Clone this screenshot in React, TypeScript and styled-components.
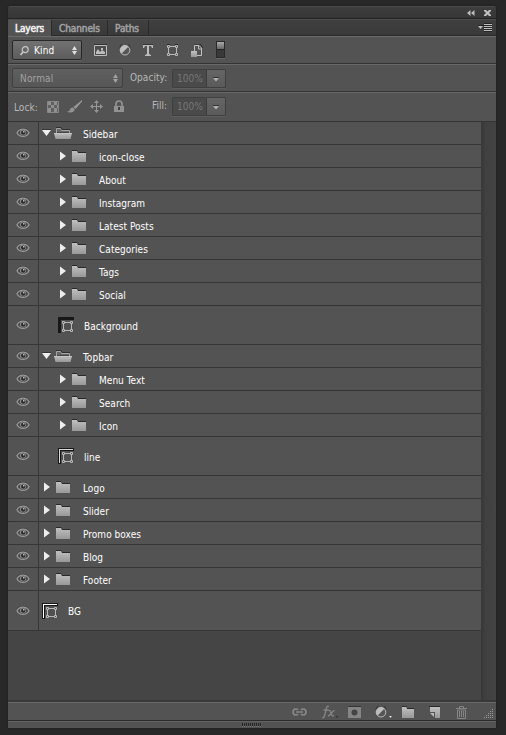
import React from "react";
import styled, { createGlobalStyle } from "styled-components";

const GlobalStyle = createGlobalStyle`
  * { box-sizing: border-box; }
  body { margin: 0; background: #282828; }
  svg { display: block; flex: none; }
`;

const Desktop = styled.div`
  height: 735px;
  padding: 6px 10px 7px 8px;
  background: #282828;
  font-family: "DejaVu Sans Condensed", "DejaVu Sans", sans-serif;
  font-stretch: condensed;
  font-size: 10px;
  line-height: 14px;
  letter-spacing: 0.04px;
  color: #fff;
`;
const Panel = styled.section`
  height: 722px;
  display: flex;
  flex-direction: column;
  background: #535353;
  border-radius: 3px 3px 0 0;
  box-shadow: 0 0 2px #1b1b1b;
  overflow: hidden;
`;
const TitleBar = styled.header`
  height: 13px;
  flex: none;
  display: flex;
  justify-content: flex-end;
  gap: 9px;
  padding: 3px 5px 0 0;
  border-top: 1px solid #4b4b4b;
  border-bottom: 1px solid #242424;
  background: linear-gradient(#3d3d3d, #373737);
`;
const TabBar = styled.nav`
  height: 17px;
  flex: none;
  display: flex;
  background: linear-gradient(#404040, #393939);
  border-top: 1px solid #4c4c4c;
  border-bottom: 1px solid #2a2a2a;
`;
const Tab = styled.button<{ $width: number; $active?: boolean }>`
  width: ${(p) => p.$width}px;
  height: 16px;
  padding: 2px 0 0 7px;
  border: 0;
  border-right: 1px solid #2a2a2a;
  background: ${(p) => (p.$active ? "#535353" : "transparent")};
  color: ${(p) => (p.$active ? "#f4f4f4" : "#a2a2a2")};
  font: 10px/14px "DejaVu Sans Condensed", "DejaVu Sans", sans-serif;
  font-stretch: condensed;
  letter-spacing: -0.1px;
  -webkit-text-stroke: 0.5px currentColor;
  text-align: left;
`;
const TabMenu = styled.div`
  margin: 3px 4px 0 auto;
`;
const Toolbar = styled.div<{ $height: number }>`
  height: ${(p) => p.$height}px;
  flex: none;
  display: flex;
  align-items: flex-start;
  padding-left: 4px;
  border-top: 1px solid #696969;
  border-bottom: 1px solid #343434;
`;
const Select = styled.div<{ $width: number; $dim?: boolean }>`
  width: ${(p) => p.$width}px;
  height: 20px;
  margin-top: 3px;
  padding: 0 4px 0 7px;
  display: flex;
  align-items: center;
  justify-content: space-between;
  border: 1px solid ${(p) => (p.$dim ? "#404040" : "#282828")};
  border-radius: 2px;
  background: ${(p) => (p.$dim ? "linear-gradient(#5f5f5f, #565656)" : "linear-gradient(#727272, #5c5c5c)")};
  box-shadow: 0 1px 0 #606060;
  color: ${(p) => (p.$dim ? "#a2a2a2" : "#fff")};
  letter-spacing: 0.15px;
`;
const SelectLabel = styled.span`
  display: flex;
  align-items: center;
  gap: 5px;
  padding-top: 1px;
`;
const IconStrip = styled.div<{ $left: number; $top: number; $gap: number }>`
  display: flex;
  align-items: center;
  gap: ${(p) => p.$gap}px;
  margin: ${(p) => p.$top}px 0 0 ${(p) => p.$left}px;
`;
const FieldLabel = styled.span<{ $left: number; $width: number; $top: number }>`
  width: ${(p) => p.$width}px;
  margin: ${(p) => p.$top}px 0 0 ${(p) => p.$left}px;
  color: #b8b8b8;
  white-space: nowrap;
`;
const Percent = styled.div`
  width: 54px;
  height: 19px;
  margin-top: 4px;
  display: flex;
  border: 1px solid #3f3f3f;
  border-radius: 1px;
  box-shadow: 0 1px 0 #5e5e5e;
  background: #4a4a4a;
  color: #777;
`;
const PercentValue = styled.span`
  width: 34px;
  padding: 2px 0 0 4px;
  border-right: 1px solid #3c3c3c;
`;
const PercentArrow = styled.span`
  flex: 1;
  display: flex;
  align-items: center;
  justify-content: center;
  padding-top: 1px;
  background: linear-gradient(#656565, #5a5a5a);
`;
const Body = styled.div`
  flex: 1;
  display: flex;
  background: #454545;
  border-bottom: 2px solid #393939;
`;
const List = styled.div`
  width: 473px;
`;
const Scrollbar = styled.div`
  flex: 1;
  background: linear-gradient(90deg, #373737, #404040 30%, #434343);
`;
const Row = styled.div<{ $height: number }>`
  height: ${(p) => p.$height}px;
  display: flex;
  background: #535353;
  border-bottom: 1px solid #363636;
`;
const EyeCell = styled.div`
  width: 31px;
  display: flex;
  align-items: center;
  justify-content: center;
  border-right: 1px solid #363636;
`;
const Node = styled.div<{ $indent: number }>`
  display: flex;
  align-items: center;
  padding-left: ${(p) => p.$indent}px;
`;
const Glyphs = styled.span<{ $width: number; $gap: number }>`
  width: ${(p) => p.$width}px;
  display: flex;
  align-items: center;
  gap: ${(p) => p.$gap}px;
`;
const Name = styled.span`
  padding-top: 3px;
  white-space: nowrap;
`;
const Footer = styled.footer`
  height: 19px;
  flex: none;
  display: flex;
  align-items: flex-start;
  padding: 2px 2px 0 284px;
  border-top: 1px solid #696969;
  border-bottom: 1px solid #2b2b2b;
`;
const FooterItem = styled.span<{ $width: number }>`
  width: ${(p) => p.$width}px;
  height: 14px;
  flex: none;
  display: flex;
  align-items: center;
`;
const ResizeBar = styled.div`
  height: 7px;
  flex: none;
  display: flex;
  padding: 1px 0 0 234px;
  border-top: 1px solid #626262;
`;

type Kind = "open" | "closed" | "shape";
interface Layer { name: string; kind: Kind; depth?: number; thumb?: string; height?: number }

const layers: Layer[] = [
  { name: "Sidebar", kind: "open" },
  { name: "icon-close", kind: "closed", depth: 1 },
  { name: "About", kind: "closed", depth: 1 },
  { name: "Instagram", kind: "closed", depth: 1 },
  { name: "Latest Posts", kind: "closed", depth: 1 },
  { name: "Categories", kind: "closed", depth: 1 },
  { name: "Tags", kind: "closed", depth: 1 },
  { name: "Social", kind: "closed", depth: 1 },
  { name: "Background", kind: "shape", depth: 1, thumb: "#191919", height: 39 },
  { name: "Topbar", kind: "open" },
  { name: "Menu Text", kind: "closed", depth: 1 },
  { name: "Search", kind: "closed", depth: 1 },
  { name: "Icon", kind: "closed", depth: 1 },
  { name: "line", kind: "shape", depth: 1, thumb: "#d8d8d8", height: 39 },
  { name: "Logo", kind: "closed" },
  { name: "Slider", kind: "closed" },
  { name: "Promo boxes", kind: "closed" },
  { name: "Blog", kind: "closed" },
  { name: "Footer", kind: "closed" },
  { name: "BG", kind: "shape", thumb: "#ffffff", height: 40 },
];

const Gradients = () => (
  <svg width="0" height="0">
    <defs>
      <linearGradient id="metal" x1="0" y1="0" x2="0" y2="1">
        <stop offset="0" stopColor="#c0c0c0" />
        <stop offset="1" stopColor="#989898" />
      </linearGradient>
      <linearGradient id="knob" x1="0" y1="0" x2="0" y2="1">
        <stop offset="0" stopColor="#aaa" />
        <stop offset="1" stopColor="#666" />
      </linearGradient>
    </defs>
  </svg>
);

const Eye = () => (
  <svg width="14" height="12" viewBox="0 0 14 12">
    <path d="M1 4.500C3.500.3 10.500.3 13 4.500" fill="none" stroke="#3a3a3a" />
    <path d="M1 5.700C3.500.9 10.500.9 13 5.700C10.500 10.700 3.500 10.700 1 5.700Z" fill="#484848" stroke="#9a9a9a" strokeWidth="1.300" />
    <circle cx="7" cy="5.600" r="3" fill="#8e8e8e" />
    <circle cx="7.200" cy="5.600" r="2.200" fill="#2c2c2c" />
    <rect x="7" y="4" width="1.500" height="1.500" fill="#bbb" />
  </svg>
);
const ArrowRight = () => (
  <svg width="6" height="10" viewBox="0 0 6 10"><path d="M0 .5L6 5L0 9.500Z" fill="#ededed" /></svg>
);
const ArrowDown = () => (
  <svg width="9" height="8" viewBox="0 0 9 8"><path d="M0 0H9V1H0Z" fill="#353535" /><path d="M0 1H9L4.500 7Z" fill="#efefef" /></svg>
);
const ClosedFolder = ({ width = 14 }: { width?: number }) => (
  <svg width={width} height="12" viewBox="0 0 14 12" preserveAspectRatio="none">
    <path d="M0 1V0H5L6 2H14V3H0Z" fill="#292929" />
    <path d="M0 1H5L6 3H14V12H0Z" fill="url(#metal)" />
  </svg>
);
const OpenFolder = () => (
  <svg width="18" height="12" viewBox="0 0 18 12">
    <path d="M2.500 6V1.500H6.500L7.500 3.500H15.500V6" fill="#656565" stroke="#a5a5a5" />
    <path d="M2 .5H7L8 2.500H16" fill="none" stroke="#303030" />
    <path d="M0 6H18L16.500 12H1.500Z" fill="url(#metal)" />
    <path d="M3 5.500H15" stroke="#474747" />
    <path d="M0 6.500H18" stroke="#c4c4c4" />
  </svg>
);
const ShapeFrame = ({ x = 0, y = 0 }: { x?: number; y?: number }) => (
  <g transform={`translate(${x} ${y})`} fill="none" stroke="#b9b9b9">
    <path d="M1.500 3V8M9.500 3V8M3 1.500H8M3 9.500H8" />
    <path d="M.5.5h2v2h-2zM8.500.5h2v2h-2zM.5 8.500h2v2h-2zM8.500 8.500h2v2h-2z" />
  </g>
);
const ShapeThumb = ({ color }: { color: string }) => (
  <svg width="16" height="16" viewBox="0 0 16 16">
    <path d="M0 0H16V3H3V16H0Z" fill="#171717" />
    <path d="M1 15V1H15V2H2V15Z" fill={color} />
    <path d="M3 3H16V16H3Z" fill="#505050" />
    <ShapeFrame x={4} y={4} />
  </svg>
);
const UpDown = ({ color }: { color: string }) => (
  <svg width="5" height="9" viewBox="0 0 5 9"><path d="M0 4L2.500 0L5 4ZM0 5H5L2.500 9Z" fill={color} /></svg>
);
const SmallTriangle = () => (
  <svg width="6" height="5" viewBox="0 0 6 5"><path d="M0 0H6V1H0Z" fill="#333" /><path d="M0 1H6L3 4.500Z" fill="#b0b0b0" /></svg>
);
const Adjustment = () => (
  <svg width="12" height="12" viewBox="0 0 12 12">
    <path d="M1 4A5 5 0 0 1 11 4" fill="none" stroke="#333" />
    <circle cx="6" cy="6.200" r="4.800" fill="#555" stroke="#bbb" />
    <path d="M2.600 9.600A4.800 4.800 0 0 1 9.400 2.800Z" fill="#bebebe" />
  </svg>
);

const LayerRow = ({ layer }: { layer: Layer }) => {
  const { kind, depth = 0 } = layer;
  const base = kind === "closed" ? 5 : 3;
  return (
    <Row $height={layer.height ?? 23}>
      <EyeCell><Eye /></EyeCell>
      <Node $indent={base + depth * 16}>
        <Glyphs $width={kind === "shape" ? 26 : kind === "open" ? 41 : 39} $gap={kind === "open" ? 3 : 6}>
          {kind === "open" && <><ArrowDown /><OpenFolder /></>}
          {kind === "closed" && <><ArrowRight /><ClosedFolder /></>}
          {kind === "shape" && <ShapeThumb color={layer.thumb ?? "#fff"} />}
        </Glyphs>
        <Name>{layer.name}</Name>
      </Node>
    </Row>
  );
};

const PercentField = () => (
  <Percent><PercentValue>100%</PercentValue><PercentArrow><SmallTriangle /></PercentArrow></Percent>
);

export default function App() {
  return (
    <Desktop>
      <GlobalStyle />
      <Panel>
        <TitleBar>
          <svg width="8" height="7" viewBox="0 0 8 7"><path d="M3.500 0V6L0 3ZM7.500 0V6L4 3Z" fill="#bdbdbd" /></svg>
          <svg width="7" height="6" viewBox="0 0 7 6"><path d="M0 0H2L3.500 1.500L5 0H7V1L5 3L7 5V6H5L3.500 4.500L2 6H0V5L2 3L0 1Z" fill="#c0c0c0" /></svg>
        </TitleBar>
        <TabBar>
          <Tab $width={44} $active>Layers</Tab>
          <Tab $width={56}>Channels</Tab>
          <Tab $width={41}>Paths</Tab>
          <TabMenu>
            <svg width="14" height="9" viewBox="0 0 14 9">
              <path d="M0 2H6V3H0ZM6 0H14V9H6Z" fill="#242424" />
              <path d="M0 3H5L2.500 6ZM6 1H14V2H6ZM6 3H14V4H6ZM6 5H14V6H6ZM6 7H14V8H6Z" fill="#bebebe" />
            </svg>
          </TabMenu>
        </TabBar>

        <Toolbar $height={28}>
          <Select $width={70}>
            <SelectLabel>
              <svg width="9" height="10" viewBox="0 0 9 10"><circle cx="5.200" cy="3.700" r="3" fill="none" stroke="#c8c8c8" strokeWidth="1.200" /><path d="M3 6L.5 9" stroke="#c8c8c8" strokeWidth="1.600" /></svg>
              Kind
            </SelectLabel>
            <UpDown color="#e1e1e1" />
          </Select>
          <IconStrip $left={12} $top={4} $gap={12}>
            <svg width="13" height="12" viewBox="0 0 13 12"><path d="M0 0H13V1H0Z" fill="#333" /><path d="M.5 1.500H12.500V11.500H.5Z" fill="#4c4c4c" stroke="#bdbdbd" /><path d="M2 10V8L4 5L6 8L8 6L11 8V10ZM7 4h2v2h-2z" fill="#bdbdbd" /></svg>
            <Adjustment />
            <svg width="12" height="12" viewBox="0 0 12 12"><path d="M0 0H10V1H0Z" fill="#333" /><path d="M0 1H10V4H9L8 2H6V10L8 11V12H2V11L4 10V2H2L1 4H0Z" fill="#bdbdbd" /></svg>
            <svg width="12" height="12" viewBox="0 0 12 12"><path d="M0 0H3V1H0ZM8 0H11V1H8Z" fill="#292929" /><ShapeFrame y={1} /></svg>
            <svg width="12" height="13" viewBox="0 0 12 13"><path d="M3 0H9L12 4" fill="none" stroke="#292929" /><path d="M3.500 7V1.500H8L10.500 4V11.500H6" fill="none" stroke="#c2c2c2" /><path d="M7.500 2V5H11" fill="none" stroke="#b8b8b8" /><path d="M0 7H6V13H0Z" fill="url(#metal)" /></svg>
            <svg width="10" height="18" viewBox="-1 0 10 18"><rect x=".5" y=".5" width="8" height="16" fill="#393939" stroke="#292929" /><rect x="1" y="1" width="7" height="7" fill="url(#knob)" /><path d="M1 8.500H8" stroke="#222" /><path d="M0 17.500H9" stroke="#686868" /></svg>
          </IconStrip>
        </Toolbar>

        <Toolbar $height={28}>
          <Select $width={111} $dim><SelectLabel>Normal</SelectLabel><UpDown color="#a2a2a2" /></Select>
          <FieldLabel $left={7} $width={42} $top={6}>Opacity:</FieldLabel>
          <PercentField />
        </Toolbar>

        <Toolbar $height={30}>
          <FieldLabel $left={2} $width={33} $top={8}>Lock:</FieldLabel>
          <IconStrip $left={0} $top={7} $gap={8}>
            <svg width="12" height="12" viewBox="0 0 12 12"><path d="M.5.500h11v11h-11z" fill="#606060" stroke="#888" /><path d="M1 1h3v3H1zM7 1h3v3H7zM4 4h3v3H4zM1 7h3v4H1zM7 7h3v4H7zM10 4h1v3h-1z" fill="#909090" /></svg>
            <svg width="15" height="13" viewBox="0.5 0 15 13"><path d="M15.500 0L7 7L9 9L16 1Z" fill="#999" /><path d="M6 7.500C8 8 9 10 7 11.500C5 13 2 12.500 0 12C2 11.500 3 11 3.500 9.500C4 8 5 7.300 6 7.500Z" fill="#929292" /></svg>
            <svg width="13" height="13" viewBox="0 0 13 13"><path d="M6.500 2V11M2 6.500H11" stroke="#999" /><path d="M4 3L6.500 0L9 3ZM4 10H9L6.500 13ZM3 4V9L0 6.500ZM10 4V9L13 6.500Z" fill="#939393" /></svg>
            <svg width="14" height="13" viewBox="-2 0 14 13"><path d="M3 6V4C3 0 9 0 9 4V6" fill="none" stroke="#929292" strokeWidth="1.700" /><path d="M1 6H11V12H1Z" fill="#929292" /><path d="M5 7h2v3H5z" fill="#414141" /></svg>
          </IconStrip>
          <FieldLabel $left={27} $width={20} $top={6}>Fill:</FieldLabel>
          <PercentField />
        </Toolbar>

        <Body>
          <List>{layers.map((l) => <LayerRow key={l.name} layer={l} />)}</List>
          <Scrollbar />
        </Body>

        <Footer>
          <FooterItem $width={30}>
            <svg width="15" height="10" viewBox="0 0 15 10"><path d="M6 3C5 1.500 1 1.500 1 5C1 8.500 5 8.500 6 7M9 3C10 1.500 14 1.500 14 5C14 8.500 10 8.500 9 7M4 5H11" fill="none" stroke="#868686" strokeWidth="1.700" /></svg>
          </FooterItem>
          <FooterItem $width={26}>
            <svg width="17" height="14" viewBox="0.5 0 17 14"><path d="M7.500 1.500C5 .5 5 3 4.500 5L3 11C2.500 13 1 13 0 12.500M2 5H7M7 5.500C8.500 5 9 6 9.500 8C10 10.500 11 11.500 12.500 10.500M13 5.500C11 5.500 9 10.500 6.500 11" fill="none" stroke="#858585" strokeWidth="1.300" /><path d="M14 11H17L15.500 13Z" fill="#333" /></svg>
          </FooterItem>
          <FooterItem $width={27}>
            <svg width="13" height="12" viewBox="0 0 13 12"><path d="M0 0H13V12H0Z" fill="#333" /><path d="M0 1H13V12H0Z" fill="#858585" /><circle cx="6.500" cy="6.500" r="3" fill="#444" /></svg>
          </FooterItem>
          <FooterItem $width={27}>
            <Adjustment />
            <svg width="6" height="14" viewBox="0 0 6 14"><path d="M2 11H5L3.500 13Z" fill="#ddd" /></svg>
          </FooterItem>
          <FooterItem $width={27}><ClosedFolder width={12} /></FooterItem>
          <FooterItem $width={27}>
            <svg width="12" height="12" viewBox="0 0 12 12"><path d="M0 0H11V1H0Z" fill="#292929" /><path d="M1 1H11V12H6V6H1Z" fill="url(#metal)" /><path d="M1 7H5V11Z" fill="#bbb" /></svg>
          </FooterItem>
          <FooterItem $width={28}>
            <svg width="11" height="13" viewBox="0 0 11 13"><path d="M3.500 2V.5H7.500V2M0 2.500H11" fill="none" stroke="#858585" /><path d="M1.500 4V12.500H9.500V4ZM3.500 5V11M5.500 5V11M7.500 5V11" fill="none" stroke="#858585" /></svg>
          </FooterItem>
          <svg width="10" height="14" viewBox="0 0 10 14"><path d="M8 4h1v1H8zM6 6h1v1H6zM8 6h1v1H8zM4 8h1v1H4zM6 8h1v1H6zM8 8h1v1H8zM2 10h1v1H2zM4 10h1v1H4zM6 10h1v1H6zM8 10h1v1H8zM0 12h1v1H0zM2 12h1v1H2zM4 12h1v1H4zM6 12h1v1H6zM8 12h1v1H8z" fill="#999" /></svg>
        </Footer>
        <ResizeBar>
          <svg width="20" height="5" viewBox="0 0 20 5"><path d="M.5 0V3M2.500 0V3M4.500 0V3M6.500 0V3M8.500 0V3M10.500 0V3M12.500 0V3M14.500 0V3M16.500 0V3M18.500 0V3" stroke="#272727" /><path d="M0 3.500H19" stroke="#777" strokeDasharray="1 1" /></svg>
        </ResizeBar>
      </Panel>
      <Gradients />
    </Desktop>
  );
}
